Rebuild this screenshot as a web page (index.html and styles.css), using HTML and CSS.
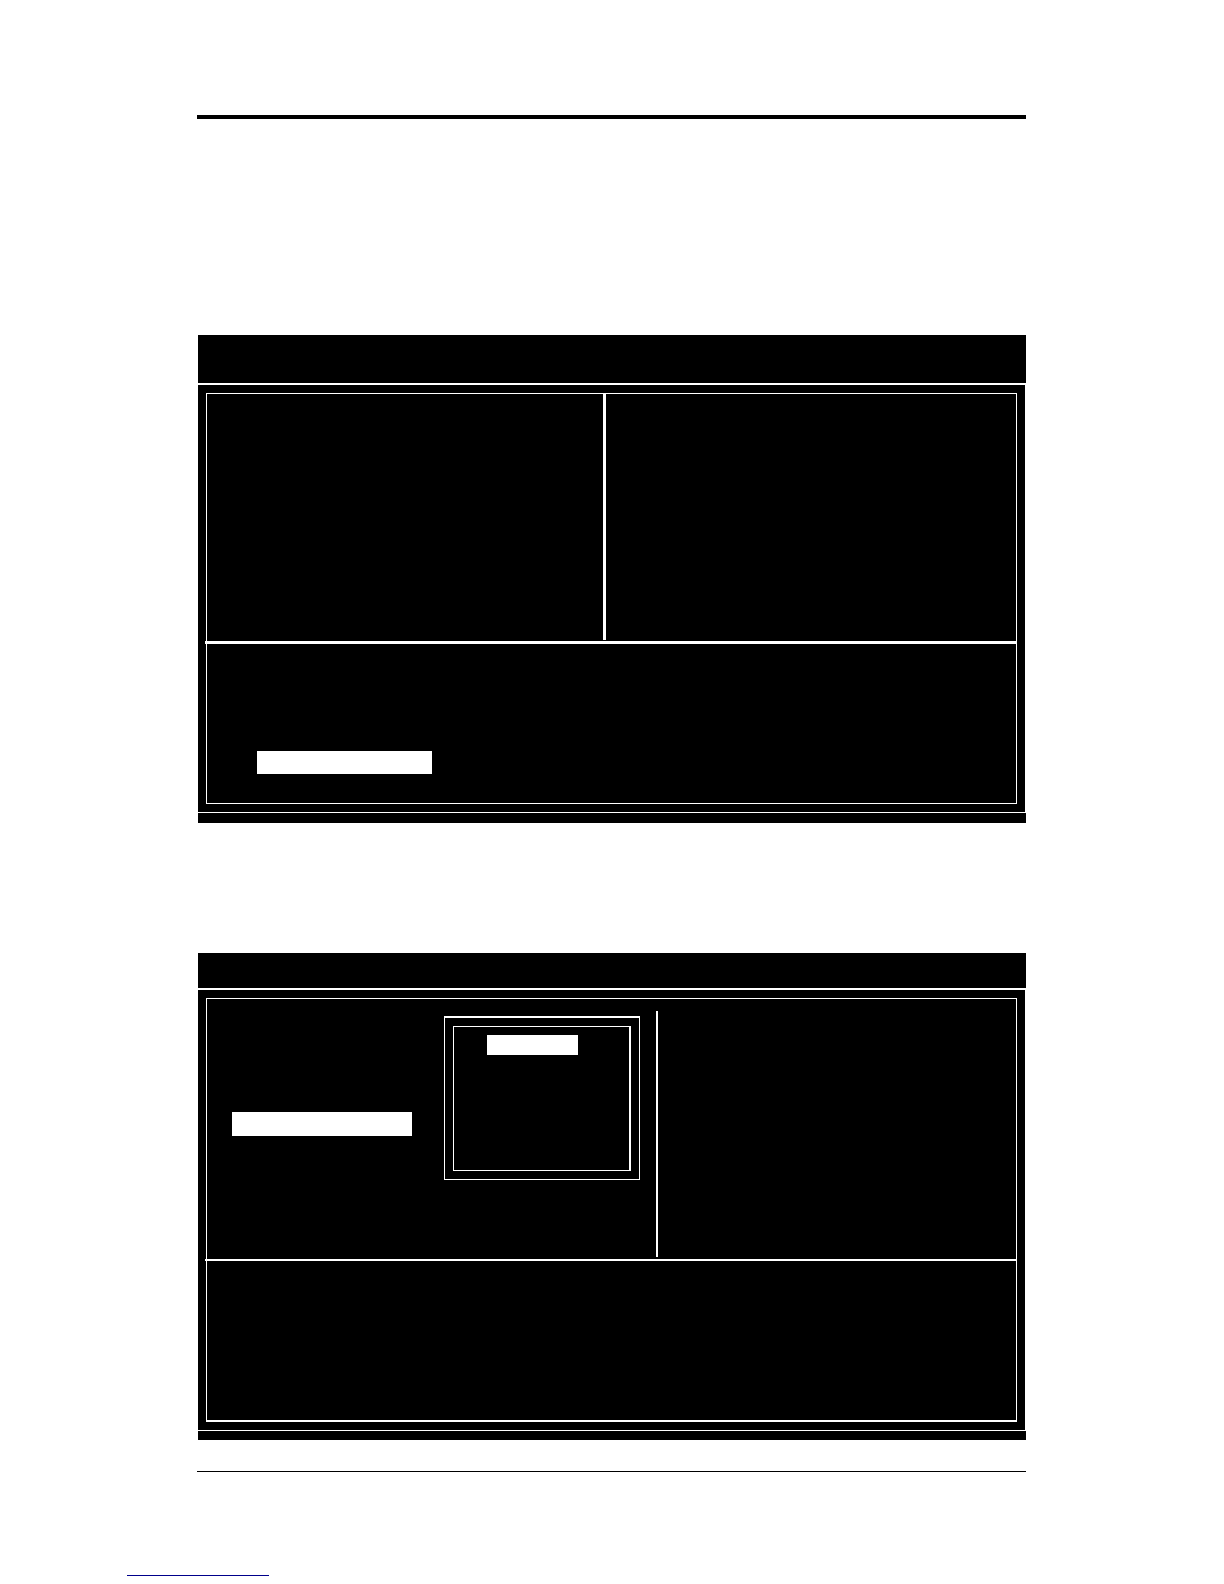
FILE: index.html
```html
<!doctype html>
<html lang="en">
<head>
	<meta charset="UTF-8">
	<title>Setup Utility</title>
	<link rel="stylesheet" href="styles.css">
</head>
<body>
	<div class="page">
		<div class="rule-top"></div>

		<!-- main menu -->
		<div class="screen main">
			<div class="title"></div>
			<div class="content">
				<div class="frame">
					<div class="columns">
						<div class="left"></div>
						<div class="right"></div>
					</div>
					<div class="line"></div>
					<div class="help">
						<div class="bar"></div>
					</div>
				</div>
			</div>
			<div class="foot"></div>
		</div>

		<!-- menu with the option box open -->
		<div class="screen option">
			<div class="title"></div>
			<div class="content">
				<div class="frame">
					<div class="columns">
						<div class="left">
							<div class="bar"></div>
							<div class="popup">
								<div class="list">
									<div class="picked"></div>
								</div>
							</div>
						</div>
						<div class="right"></div>
					</div>
					<div class="line"></div>
					<div class="help"></div>
				</div>
			</div>
			<div class="foot"></div>
		</div>

		<div class="rule-bottom"></div>
		<div class="link-line"></div>
	</div>
</body>
</html>
```

FILE: styles.css
```css
*{margin:0;padding:0;box-sizing:border-box;}
body{background:#fff;}
.page{padding:115px 198px 0 197px;}
.rule-top{height:4px;background:#000;}
.rule-bottom{height:1px;margin-top:31px;background:#000;}
.link-line{
	width:142px;
	height:1px;
	margin:103px 0 0 -70px;
	background:#00008b;
}

/* screens */
.screen{margin-left:1px;}
.main{margin-top:216px;}
.option{margin-top:130px;}
.title{
	height:48px;
	margin-bottom:2px;
	background:#000;
}
.content{
	padding:8px;
	margin:0 1px 1px 0;
	background:#000;
}
.foot{height:10px;background:#000;}
.frame{border:1px solid #fff;}
.columns{
	display:grid;
	grid-template-columns:399fr 410fr;
	padding-bottom:1px;
}
.left{
	display:flex;
	align-items:flex-start;
	height:246px;
	border-right:3px solid #fff;
}
.line{
	height:3px;
	margin-left:-2px;
	background:#fff;
}
.help{
	height:159px;
	padding:107px 0 0 50px;
}
.bar{
	width:175px;
	height:23px;
	background:#fff;
}

/* second screen */
.option .title{height:35px;}
.option .foot{height:9px;}
.option .frame{border-bottom-width:2px;}
.option .columns{
	grid-template-columns:451fr 358fr;
	padding:12px 0 2px;
}
.option .left{border-right-width:2px;}
.option .line{height:2px;}
.option .bar{
	width:180px;
	height:24px;
	margin:101px 32px 0 25px;
}
.popup{
	width:196px;
	margin-top:5px;
	padding:8px;
	border:1px solid #fff;
	border-top-width:2px;
}
.list{
	height:145px;
	padding:8px 0 0 33px;
	border:1px solid #fff;
	border-right-width:2px;
}
.picked{
	width:91px;
	height:20px;
	background:#fff;
}
```
